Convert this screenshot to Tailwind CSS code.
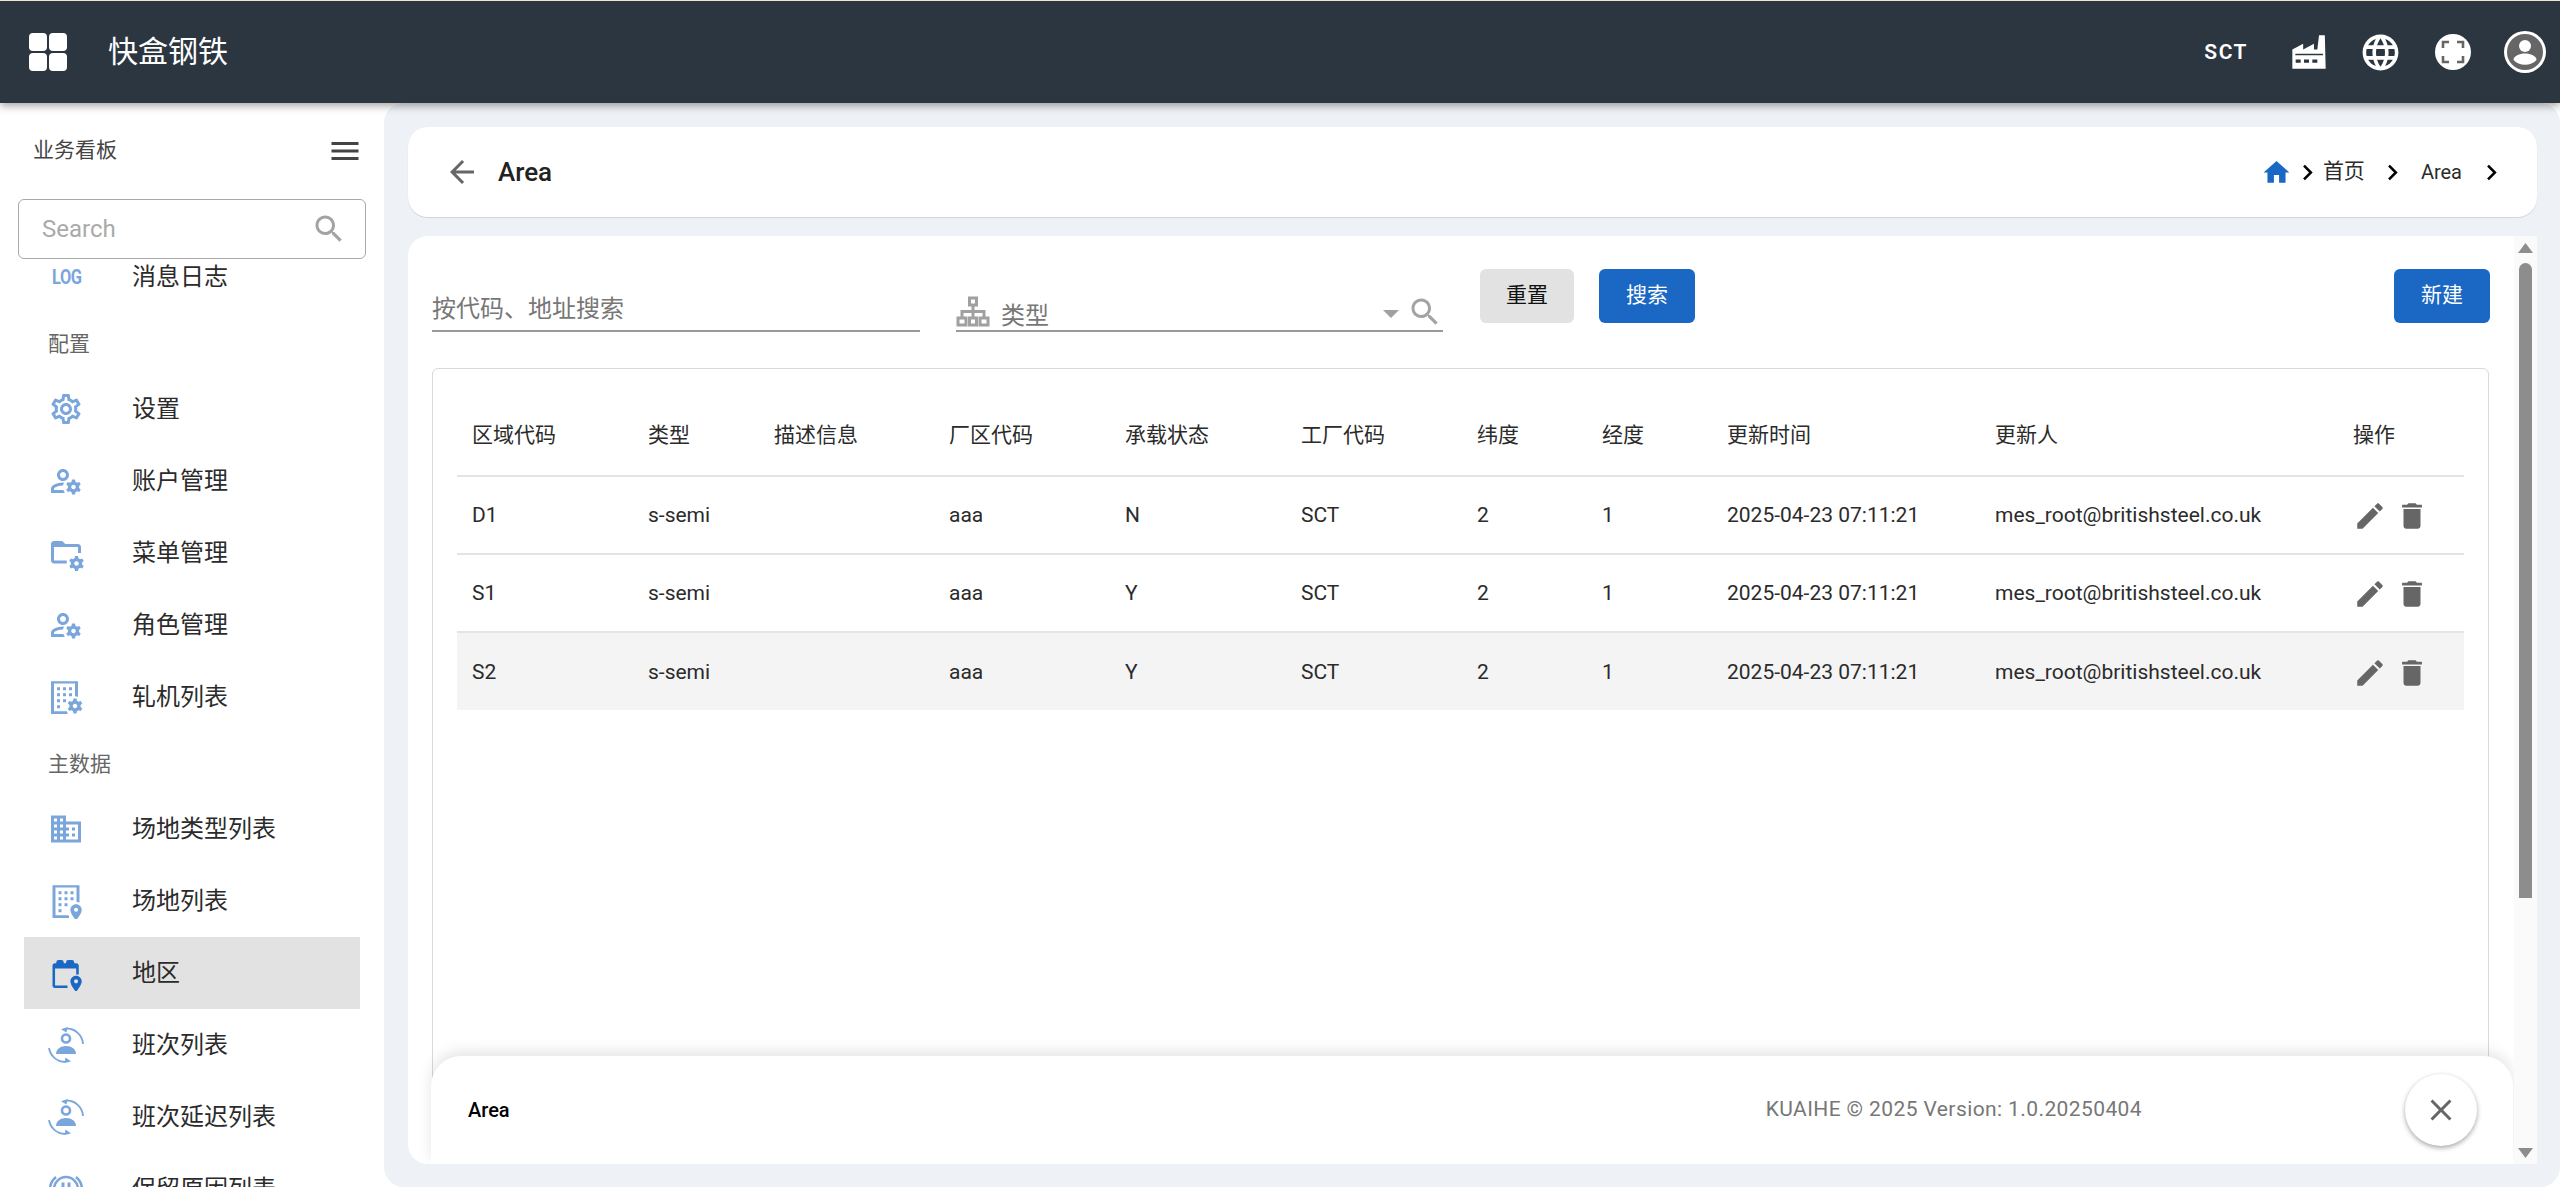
<!DOCTYPE html>
<html lang="zh">
<head>
<meta charset="UTF-8">
<title>Area</title>
<script src="https://cdn.jsdelivr.net/npm/@tailwindcss/browser@4"></script>
</head>
<body class="h-screen overflow-hidden bg-white flex flex-col text-[#2b2b2b] [font-family:Roboto,'Noto_Sans_CJK_SC',sans-serif]">
    <!-- icon sprites -->
    <svg class="hidden">
        <symbol id="i-search" viewBox="0 0 24 24"><path d="M15.5 14h-.79l-.28-.27C15.41 12.59 16 11.11 16 9.5 16 5.91 13.09 3 9.5 3S3 5.91 3 9.5 5.91 16 9.5 16c1.61 0 3.09-.59 4.23-1.57l.27.28v.79l5 4.99L20.49 19l-4.99-5zm-6 0C7.01 14 5 11.99 5 9.5S7.01 5 9.5 5 14 7.01 14 9.5 11.99 14 9.5 14z"/></symbol>
        <symbol id="i-chevron" viewBox="0 0 24 24"><path d="M10 6L8.59 7.41 13.17 12l-4.58 4.59L10 18l6-6z"/></symbol>
        <symbol id="i-edit" viewBox="0 0 24 24"><path d="M3 17.25V21h3.75L17.81 9.94l-3.75-3.75L3 17.25zM20.71 7.04c.39-.39.39-1.02 0-1.41l-2.34-2.34c-.39-.39-1.02-.39-1.41 0l-1.83 1.83 3.75 3.75 1.83-1.83z"/></symbol>
        <symbol id="i-delete" viewBox="0 0 24 24"><path d="M6 19c0 1.1.9 2 2 2h8c1.1 0 2-.9 2-2V7H6v12zM19 4h-3.5l-1-1h-5l-1 1H5v2h14V4z"/></symbol>
        <symbol id="i-gear" viewBox="0 0 24 24"><path d="M19.43 12.98c.04-.32.07-.64.07-.98 0-.34-.03-.66-.07-.98l2.11-1.65c.19-.15.24-.42.12-.64l-2-3.46c-.09-.16-.26-.25-.44-.25-.06 0-.12.01-.17.03l-2.49 1c-.52-.4-1.08-.73-1.69-.98l-.38-2.65C14.46 2.18 14.25 2 14 2h-4c-.25 0-.46.18-.49.42l-.38 2.65c-.61.25-1.17.59-1.69.98l-2.49-1c-.06-.02-.12-.03-.18-.03-.17 0-.34.09-.43.25l-2 3.46c-.13.22-.07.49.12.64l2.11 1.65c-.04.32-.07.65-.07.98 0 .33.03.66.07.98l-2.11 1.65c-.19.15-.24.42-.12.64l2 3.46c.09.16.26.25.44.25.06 0 .12-.01.17-.03l2.49-1c.52.4 1.08.73 1.69.98l.38 2.65c.03.24.24.42.49.42h4c.25 0 .46-.18.49-.42l.38-2.65c.61-.25 1.17-.59 1.69-.98l2.49 1c.06.02.12.03.18.03.17 0 .34-.09.43-.25l2-3.46c.12-.22.07-.49-.12-.64l-2.11-1.65zm-1.98-1.71c.04.31.05.52.05.73 0 .21-.02.43-.05.73l-.14 1.13.89.7 1.08.84-.7 1.21-1.27-.51-1.04-.42-.9.68c-.43.32-.84.56-1.25.73l-1.06.43-.16 1.13-.2 1.35h-1.4l-.19-1.35-.16-1.13-1.06-.43c-.43-.18-.83-.41-1.23-.71l-.91-.7-1.06.43-1.27.51-.7-1.21 1.08-.84.89-.7-.14-1.13c-.03-.31-.05-.54-.05-.74s.02-.43.05-.73l.14-1.13-.89-.7-1.08-.84.7-1.21 1.27.51 1.04.42.9-.68c.43-.32.84-.56 1.25-.73l1.06-.43.16-1.13.2-1.35h1.39l.19 1.35.16 1.13 1.06.43c.43.18.83.41 1.23.71l.91.7 1.06-.43 1.27-.51.7 1.21-1.07.85-.89.7.14 1.13zM12 8c-2.21 0-4 1.79-4 4s1.79 4 4 4 4-1.79 4-4-1.79-4-4-4zm0 6c-1.1 0-2-.9-2-2s.9-2 2-2 2 .9 2 2-.9 2-2 2z"/></symbol>
        <symbol id="i-user-gear" viewBox="0 0 24 24"><path d="M4 18v-.65c0-.34.16-.66.41-.81C6.1 15.53 8.03 15 10 15c.03 0 .05 0 .08.01.1-.7.3-1.37.59-1.98-.22-.02-.44-.03-.67-.03-2.42 0-4.68.67-6.61 1.82-.88.52-1.39 1.5-1.39 2.53V20h9.26c-.42-.6-.75-1.28-.97-2H4zM10 12c2.21 0 4-1.79 4-4s-1.79-4-4-4-4 1.79-4 4 1.79 4 4 4zm0-6c1.1 0 2 .9 2 2s-.9 2-2 2-2-.9-2-2 .9-2 2-2zM20.75 16c0-.22-.03-.42-.06-.63l1.14-1.01-1-1.73-1.45.49c-.32-.27-.68-.48-1.08-.63L18 11h-2l-.3 1.49c-.4.15-.76.36-1.08.63l-1.45-.49-1 1.73 1.14 1.01c-.03.21-.06.41-.06.63s.03.42.06.63l-1.14 1.01 1 1.73 1.45-.49c.32.27.68.48 1.08.63L16 21h2l.3-1.49c.4-.15.76-.36 1.08-.63l1.45.49 1-1.73-1.14-1.01c.03-.21.06-.41.06-.63zM17 17.5c-.83 0-1.5-.67-1.5-1.5s.67-1.5 1.5-1.5 1.5.67 1.5 1.5-.67 1.5-1.5 1.5z"/></symbol>
        <symbol id="i-small-gear" viewBox="0 0 24 24"><path d="M20.75 16c0-.22-.03-.42-.06-.63l1.14-1.01-1-1.73-1.45.49c-.32-.27-.68-.48-1.08-.63L18 11h-2l-.3 1.49c-.4.15-.76.36-1.08.63l-1.45-.49-1 1.73 1.14 1.01c-.03.21-.06.41-.06.63s.03.42.06.63l-1.14 1.01 1 1.73 1.45-.49c.32.27.68.48 1.08.63L16 21h2l.3-1.49c.4-.15.76-.36 1.08-.63l1.45.49 1-1.73-1.14-1.01c.03-.21.06-.41.06-.63zM17 17.5c-.83 0-1.5-.67-1.5-1.5s.67-1.5 1.5-1.5 1.5.67 1.5 1.5-.67 1.5-1.5 1.5z"/></symbol>
        <symbol id="i-folder-gear" viewBox="0 0 24 24"><path d="M4 4h5.5l2 2H20c1.1 0 2 .9 2 2v4h-2V8H4v9h8.5v2H4c-1.1 0-2-.9-2-2V6c0-1.1.9-2 2-2z"/><use href="#i-small-gear" x="2" y="3" width="24" height="24"/></symbol>
        <symbol id="i-building" viewBox="0 0 24 24"><path fill-rule="evenodd" d="M2 1.5h18V14h-2V3H4v18.5h9v1.8H2z"/><path d="M6 5.5h2v2H6zM10 5.5h2v2h-2zM14 5.5h2v2h-2zM6 9.5h2v2H6zM10 9.5h2v2h-2zM14 9.5h2v2h-2zM6 13.5h2v2H6zM10 13.5h2v2h-2zM6 17.5h2v2H6z"/></symbol>
        <symbol id="i-building-gear" viewBox="0 0 24 24"><use href="#i-building" width="24" height="24"/><circle cx="18" cy="18" r="6.5" fill="#fff"/><use href="#i-small-gear" x="1" y="2" width="24" height="24"/></symbol>
        <symbol id="i-pin" viewBox="0 0 24 24"><path fill-rule="evenodd" d="M12 2C8.13 2 5 5.13 5 9c0 5.25 7 13 7 13s7-7.75 7-13c0-3.87-3.13-7-7-7zm0 9.5a2.5 2.5 0 1 1 0-5 2.5 2.5 0 0 1 0 5z"/></symbol>
        <symbol id="i-building-pin" viewBox="0 0 24 24"><use href="#i-building" x="1" width="24" height="24"/><circle cx="18.7" cy="18.5" r="6" fill="#fff"/><use href="#i-pin" x="12.2" y="13" width="13" height="13"/></symbol>
        <symbol id="i-calendar-pin" viewBox="0 0 24 24"><path d="M4.5 5.5h1V5a1.6 1.6 0 0 1 1.6-1.6h1.8A1.6 1.6 0 0 1 10.500 5v.5h1.500V5a1.600 1.600 0 0 1 1.600-1.600h2.300A1.600 1.600 0 0 1 17.500 5v.5H19c.8 0 1.500.7 1.500 1.500v6h-1.700V9H4.700v11.300h8.300V22H4.500C3.700 22 3 21.300 3 20.500V7c0-.8.7-1.500 1.500-1.500z"/><use href="#i-pin" x="12.200" y="12.700" width="13" height="13"/></symbol>
        <symbol id="i-domain" viewBox="0 0 24 24"><path d="M12 7V3H2v18h20V7H12zM6 19H4v-2h2v2zm0-4H4v-2h2v2zm0-4H4V9h2v2zm0-4H4V5h2v2zm4 12H8v-2h2v2zm0-4H8v-2h2v2zm0-4H8V9h2v2zm0-4H8V5h2v2zm10 12h-8v-2h2v-2h-2v-2h2v-2h-2V9h8v10zm-2-8h-2v2h2v-2zm0 4h-2v2h2v-2z"/></symbol>
        <symbol id="i-shift" viewBox="0 0 36 36"><circle cx="18" cy="11.500" r="4" fill="none" stroke="currentColor" stroke-width="2.600"/><path d="M8 27c0-5 4.500-8 10-8s10 3 10 8z"/><path d="M19 1.500A16.500 16.500 0 0 1 35 17M1 21a16.500 16.500 0 0 0 16 14" fill="none" stroke="currentColor" stroke-width="1.800"/><path d="M13 2.200l6.500-2.200-1 5.500zM23 34.500l-6.500 1.500 1-5.500z"/></symbol>
        <symbol id="i-hold" viewBox="0 0 36 36"><circle cx="18" cy="18" r="12" fill="none" stroke="currentColor" stroke-width="2.500"/><path d="M2 18A16 16 0 0 1 8 6M28 6a16 16 0 0 1 6 12" fill="none" stroke="currentColor" stroke-width="2.500"/><path d="M13.500 11.500h3V24h-3zM19.500 11.500h3V24h-3z"/></symbol>
    </svg>

    <!-- Top bar -->
    <header class="relative z-20 shrink-0 h-[103px] bg-[#2c3640] border-t border-[#f4e3cd] shadow-[0_3px_8px_rgba(0,0,0,0.35)] flex items-center text-white">
        <div class="ml-[29px] grid grid-cols-2 gap-[2px] w-[38px]">
            <span class="h-[18px] rounded-[4px] bg-white"></span>
            <span class="h-[18px] rounded-[4px] bg-white"></span>
            <span class="h-[18px] rounded-[4px] bg-white"></span>
            <span class="h-[18px] rounded-[4px] bg-white"></span>
        </div>
        <div class="ml-[41px] text-[30px] leading-none">快盒钢铁</div>
        <div class="ml-auto text-[21px] font-semibold tracking-[1.5px] leading-none">SCT</div>
        <svg class="ml-[41px] w-[40px] h-[40px] fill-white" viewBox="0 0 24 24"><path fill-rule="evenodd" d="M2 22V10.500l6.500-3.500v3.500l6.500-3.500v3.500h2l1-8.500h3.500L22 22zM4 16.500v2h3v-2zM9 16.500v2h3v-2zM14 16.500v2h3v-2zM3.800 14h16.600v-1H3.800z"/></svg>
        <svg class="ml-[30px] w-[43px] h-[43px] fill-white" viewBox="0 0 24 24"><path d="M11.990 2C6.470 2 2 6.480 2 12s4.470 10 9.990 10C17.520 22 22 17.520 22 12S17.520 2 11.990 2zm6.930 6h-2.950c-.32-1.250-.78-2.450-1.380-3.560 1.840.63 3.370 1.910 4.330 3.560zM12 4.040c.83 1.200 1.480 2.530 1.910 3.960h-3.820c.43-1.430 1.080-2.760 1.910-3.960zM4.260 14C4.100 13.360 4 12.690 4 12s.1-1.360.26-2h3.380c-.08.66-.14 1.320-.14 2 0 .68.06 1.340.14 2H4.260zm.82 2h2.950c.32 1.250.78 2.450 1.380 3.560-1.840-.63-3.370-1.900-4.330-3.560zm2.950-8H5.080c.96-1.660 2.490-2.930 4.330-3.560C8.810 5.550 8.350 6.750 8.030 8zM12 19.960c-.83-1.200-1.480-2.530-1.910-3.960h3.820c-.43 1.430-1.080 2.760-1.910 3.960zM14.340 14H9.660c-.09-.66-.16-1.320-.16-2 0-.68.07-1.350.16-2h4.680c.09.650.16 1.320.16 2 0 .68-.07 1.340-.16 2zm.25 5.560c.6-1.110 1.060-2.310 1.380-3.560h2.950c-.96 1.650-2.490 2.930-4.330 3.560zM16.360 14c.08-.66.14-1.320.14-2 0-.68-.06-1.340-.14-2h3.380c.16.64.26 1.310.26 2s-.1 1.360-.26 2h-3.380z"/></svg>
        <svg class="ml-[33px] w-[36px] h-[36px]" viewBox="0 0 36 36"><circle cx="18" cy="18" r="18" fill="#fff"/><path d="M8 14V8h6M22 8h6v6M28 22v6h-6M14 28H8v-6" fill="none" stroke="#666" stroke-width="2.600"/></svg>
        <svg class="ml-[33px] mr-[14px] w-[42px] h-[42px]" viewBox="0 0 42 42"><circle cx="21" cy="21" r="21" fill="#fff"/><circle cx="21" cy="21" r="18" fill="#666"/><circle cx="21" cy="15" r="6" fill="#fff"/><path d="M9.500 29c0-4 6-6.500 11.500-6.500S32.500 25 32.500 29c-2.500 3-7 4.800-11.500 4.800S12 32 9.500 29z" fill="#fff"/></svg>
    </header>

    <div class="flex-1 min-h-0 flex">
        <!-- Sidebar -->
        <aside class="w-[384px] shrink-0 flex flex-col overflow-hidden">
            <div class="h-[96px] shrink-0 flex items-center justify-between pl-[33px] pr-[21px]">
                <span class="text-[21px] text-[#444]">业务看板</span>
                <svg class="w-[36px] h-[36px] fill-[#444]" viewBox="0 0 24 24"><path d="M3 18h18v-2H3v2zm0-5h18v-2H3v2zm0-7v2h18V6H3z"/></svg>
            </div>
            <div class="relative z-10 shrink-0 mx-[18px] h-[60px] bg-white border border-[#aaa] rounded-[6px] flex items-center justify-between pl-[23px] pr-[18px]">
                <span class="text-[24px] text-[#aaa]">Search</span>
                <svg class="w-[36px] h-[36px] fill-[#a3a3a3]"><use href="#i-search"/></svg>
            </div>
            <nav class="flex-1 min-h-0 overflow-hidden text-[24px]">
                <ul class="-mt-[18px] px-[24px]">
                    <li class="h-[72px] flex items-center pl-[24px] gap-[48px]"><span class="w-[36px] text-center text-[21px] font-bold leading-none tracking-[-0.5px] scale-x-[0.78] text-[#7aa6dc]">LOG</span><span>消息日志</span></li>
                    <li class="h-[60px] flex items-center pl-[24px] pt-[3px] text-[21px] text-[#666]">配置</li>
                    <li class="h-[72px] flex items-center pl-[24px] gap-[48px]"><svg class="w-[36px] h-[36px] fill-[#7aa6dc]"><use href="#i-gear"/></svg><span>设置</span></li>
                    <li class="h-[72px] flex items-center pl-[24px] gap-[48px]"><svg class="w-[36px] h-[36px] fill-[#7aa6dc]"><use href="#i-user-gear"/></svg><span>账户管理</span></li>
                    <li class="h-[72px] flex items-center pl-[24px] gap-[48px]"><svg class="w-[36px] h-[36px] fill-[#7aa6dc]"><use href="#i-folder-gear"/></svg><span>菜单管理</span></li>
                    <li class="h-[72px] flex items-center pl-[24px] gap-[48px]"><svg class="w-[36px] h-[36px] fill-[#7aa6dc]"><use href="#i-user-gear"/></svg><span>角色管理</span></li>
                    <li class="h-[72px] flex items-center pl-[24px] gap-[48px]"><svg class="w-[36px] h-[36px] fill-[#7aa6dc]"><use href="#i-building-gear"/></svg><span>轧机列表</span></li>
                    <li class="h-[60px] flex items-center pl-[24px] pt-[3px] text-[21px] text-[#666]">主数据</li>
                    <li class="h-[72px] flex items-center pl-[24px] gap-[48px]"><svg class="w-[36px] h-[36px] fill-[#7aa6dc]"><use href="#i-domain"/></svg><span>场地类型列表</span></li>
                    <li class="h-[72px] flex items-center pl-[24px] gap-[48px]"><svg class="w-[36px] h-[36px] fill-[#7aa6dc]"><use href="#i-building-pin"/></svg><span>场地列表</span></li>
                    <li class="h-[72px] flex items-center pl-[24px] gap-[48px] bg-[#e2e2e2]"><svg class="w-[36px] h-[36px] fill-[#1a68c3]"><use href="#i-calendar-pin"/></svg><span>地区</span></li>
                    <li class="h-[72px] flex items-center pl-[24px] gap-[48px]"><svg class="w-[36px] h-[36px] fill-[#7aa6dc] text-[#7aa6dc]"><use href="#i-shift"/></svg><span>班次列表</span></li>
                    <li class="h-[72px] flex items-center pl-[24px] gap-[48px]"><svg class="w-[36px] h-[36px] fill-[#7aa6dc] text-[#7aa6dc]"><use href="#i-shift"/></svg><span>班次延迟列表</span></li>
                    <li class="h-[72px] flex items-center pl-[24px] gap-[48px]"><svg class="w-[36px] h-[36px] fill-[#7aa6dc] text-[#7aa6dc]"><use href="#i-hold"/></svg><span>保留原因列表</span></li>
                </ul>
            </nav>
        </aside>

        <!-- Main -->
        <main class="flex-1 min-w-0 bg-[#eef1f6] rounded-[20px] pl-[24px] pr-[23px] pt-[24px] pb-[23px] flex flex-col gap-[19px]">
            <div class="shrink-0 h-[90px] bg-white rounded-[20px] shadow-[0_1px_1px_rgba(0,0,0,0.12)] flex items-center pl-[36px] pr-[30px]">
                <svg class="w-[36px] h-[36px] fill-[#666]" viewBox="0 0 24 24"><path d="M20 11H7.830l5.590-5.590L12 4l-8 8 8 8 1.410-1.410L7.830 13H20v-2z"/></svg>
                <span class="ml-[18px] text-[26px] font-medium text-[#222]">Area</span>
                <div class="ml-auto flex items-center text-[20px]">
                    <svg class="w-[31px] h-[31px] fill-[#1a68c3]" viewBox="0 0 24 24"><path d="M10 20v-6h4v6h5v-8h3L12 3 2 12h3v8z"/></svg>
                    <svg class="w-[31px] h-[31px] fill-black"><use href="#i-chevron"/></svg>
                    <span class="text-[21px]">首页</span>
                    <svg class="ml-[12px] w-[31px] h-[31px] fill-black"><use href="#i-chevron"/></svg>
                    <span class="ml-[13px]">Area</span>
                    <svg class="ml-[14px] w-[31px] h-[31px] fill-black"><use href="#i-chevron"/></svg>
                </div>
            </div>

            <section class="flex-1 min-h-0 bg-white rounded-l-[20px] flex overflow-hidden">
                <div class="relative flex-1 min-w-0 pl-[24px] pr-[24px] pt-[33px] overflow-hidden">
                    <!-- Filters -->
                    <div class="h-[63px] flex items-start">
                        <div class="w-[488px] h-full flex items-end pb-[9px] border-b-2 border-[#999] text-[24px] leading-none text-[#777]">按代码、地址搜索</div>
                        <div class="ml-[36px] w-[487px] h-full flex items-end border-b-2 border-[#999] text-[24px] text-[#777]">
                            <svg class="mb-[2px] w-[34px] h-[32px] fill-none stroke-[#a0a0a0] stroke-[3]" viewBox="0 0 34 32"><path d="M13.500 2h7v7h-7zM2 22h8v7H2zM13.500 22h7v7h-7zM24 22h8v7h-8zM17 9v6.500M6 22v-6.500h22V22M17 15.500V22"/></svg>
                            <span class="ml-[11px] mb-[2px] leading-none">类型</span>
                            <svg class="ml-auto mb-[12px] w-[16px] h-[8px] fill-[#a0a0a0]" viewBox="0 0 16 8"><path d="M0 0h16l-8 8z"/></svg>
                            <svg class="ml-[8px] w-[36px] h-[36px] fill-[#a3a3a3]"><use href="#i-search"/></svg>
                        </div>
                        <button class="ml-[37px] w-[94px] h-[54px] rounded-[6px] bg-[#e2e2e2] text-[21px] text-[#111]">重置</button>
                        <button class="ml-[25px] w-[96px] h-[54px] rounded-[6px] bg-[#1a68c3] text-[21px] text-white">搜索</button>
                        <button class="ml-auto w-[96px] h-[54px] rounded-[6px] bg-[#1a68c3] text-[21px] text-white">新建</button>
                    </div>
                    <!-- Table -->
                    <div class="mt-[36px] mr-px h-[900px] border border-[#d9d9d9] rounded-[6px] px-[24px] pt-[23px]">
                        <table class="w-full table-fixed text-[21px] text-left text-[#2b2b2b] [&_td]:pt-[2px]">
                            <thead>
                                <tr class="h-[84px] border-b-2 border-[#e4e4e4]">
                                    <th class="w-[191px] pl-[15px] pt-[4px] font-normal">区域代码</th>
                                    <th class="w-[126px] pt-[4px] font-normal">类型</th>
                                    <th class="w-[175px] pt-[4px] font-normal">描述信息</th>
                                    <th class="w-[176px] pt-[4px] font-normal">厂区代码</th>
                                    <th class="w-[176px] pt-[4px] font-normal">承载状态</th>
                                    <th class="w-[176px] pt-[4px] font-normal">工厂代码</th>
                                    <th class="w-[125px] pt-[4px] font-normal">纬度</th>
                                    <th class="w-[125px] pt-[4px] font-normal">经度</th>
                                    <th class="w-[268px] pt-[4px] font-normal">更新时间</th>
                                    <th class="w-[358px] pt-[4px] font-normal">更新人</th>
                                    <th class="pt-[4px] font-normal">操作</th>
                                </tr>
                            </thead>
                            <tbody>
                                <tr class="h-[78px] border-b-2 border-[#e4e4e4]">
                                    <td class="pl-[15px]">D1</td><td>s-semi</td><td></td><td>aaa</td><td>N</td><td>SCT</td><td>2</td><td>1</td><td>2025-04-23 07:11:21</td><td>mes_root@britishsteel.co.uk</td>
                                    <td><div class="flex gap-[8px]"><svg class="w-[34px] h-[34px] fill-[#666]"><use href="#i-edit"/></svg><svg class="w-[34px] h-[34px] fill-[#666]"><use href="#i-delete"/></svg></div></td>
                                </tr>
                                <tr class="h-[78px] border-b-2 border-[#e4e4e4]">
                                    <td class="pl-[15px]">S1</td><td>s-semi</td><td></td><td>aaa</td><td>Y</td><td>SCT</td><td>2</td><td>1</td><td>2025-04-23 07:11:21</td><td>mes_root@britishsteel.co.uk</td>
                                    <td><div class="flex gap-[8px]"><svg class="w-[34px] h-[34px] fill-[#666]"><use href="#i-edit"/></svg><svg class="w-[34px] h-[34px] fill-[#666]"><use href="#i-delete"/></svg></div></td>
                                </tr>
                                <tr class="h-[78px] bg-[#f4f4f4]">
                                    <td class="pl-[15px]">S2</td><td>s-semi</td><td></td><td>aaa</td><td>Y</td><td>SCT</td><td>2</td><td>1</td><td>2025-04-23 07:11:21</td><td>mes_root@britishsteel.co.uk</td>
                                    <td><div class="flex gap-[8px]"><svg class="w-[34px] h-[34px] fill-[#666]"><use href="#i-edit"/></svg><svg class="w-[34px] h-[34px] fill-[#666]"><use href="#i-delete"/></svg></div></td>
                                </tr>
                            </tbody>
                        </table>
                    </div>
                    <!-- Footer bar floats over the table -->
                    <div class="absolute left-[23px] right-px bottom-0 h-[108px] bg-white rounded-t-[30px] shadow-[0_-5px_14px_rgba(0,0,0,0.1)] flex items-center pl-[37px] pr-[36px]">
                        <span class="text-[20px] font-medium text-black">Area</span>
                        <span class="ml-auto text-[21px] tracking-[0.4px] text-[#777]">KUAIHE © 2025 Version: 1.0.20250404</span>
                        <button class="ml-[263px] w-[72px] h-[72px] rounded-full bg-white shadow-[0_2px_5px_rgba(0,0,0,0.35)] flex items-center justify-center">
                            <svg class="w-[36px] h-[36px] fill-[#666]" viewBox="0 0 24 24"><path d="M19 6.410L17.590 5 12 10.590 6.410 5 5 6.410 10.590 12 5 17.590 6.410 19 12 13.410 17.590 19 19 17.590 13.410 12z"/></svg>
                        </button>
                    </div>
                </div>
                <!-- Scrollbar -->
                <div class="w-[23px] shrink-0 bg-[#fafafa] flex flex-col items-center pt-[7px] pb-[6px]">
                    <svg class="w-[15px] h-[10px] fill-[#8d8d8d]" viewBox="0 0 15 10"><path d="M7.500 0l7.500 10H0z"/></svg>
                    <div class="mt-[10px] w-[13px] h-[635px] rounded-t-[7px] bg-[#8d8d8d]"></div>
                    <svg class="mt-auto w-[15px] h-[10px] fill-[#8d8d8d]" viewBox="0 0 15 10"><path d="M0 0h15L7.500 10z"/></svg>
                </div>
            </section>
        </main>
    </div>
</body>
</html>
